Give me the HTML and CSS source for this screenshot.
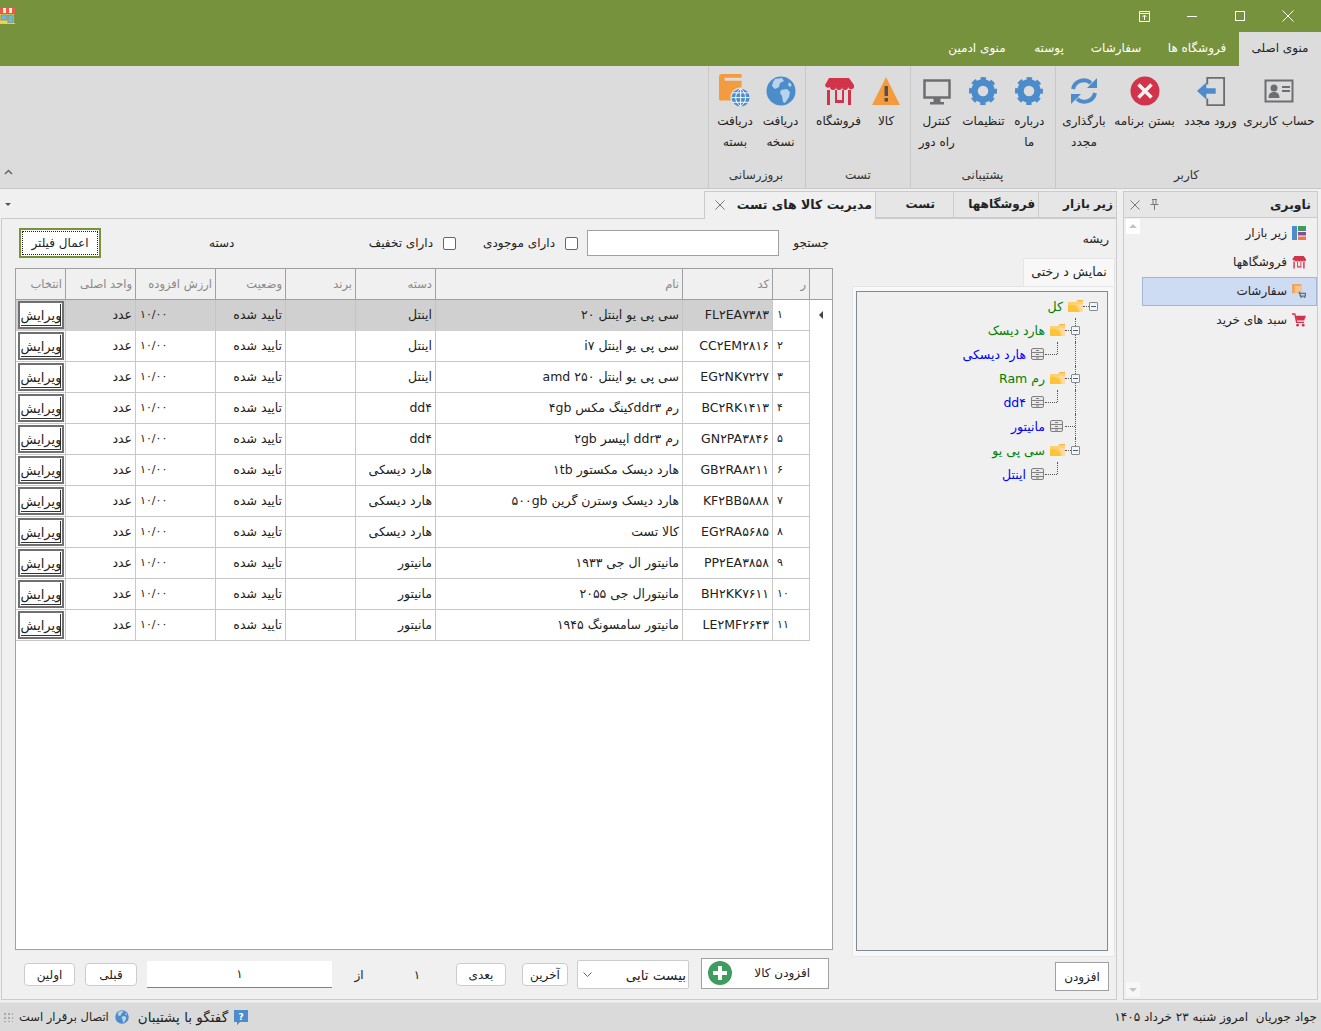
FILE: index.html
```html
<!DOCTYPE html>
<html lang="fa" dir="rtl">
<head>
    <meta charset="UTF-8">
    <title>مدیریت کالا های تست</title>
    <link rel="stylesheet" href="styles.css">
</head>
<body>
    <!-- Shared icons -->
    <svg class="defs" width="0" height="0">
        <symbol id="gear" viewBox="0 0 30 30">
            <circle cx="15" cy="15" r="8.500" fill="none" stroke="#4d8ccb" stroke-width="6.500"/>
            <circle cx="15" cy="15" r="11.500" fill="none" stroke="#4d8ccb" stroke-width="5" stroke-dasharray="5 4.030" stroke-dashoffset="2.500"/>
        </symbol>
        <symbol id="globe" viewBox="0 0 30 30">
            <circle cx="15" cy="15" r="14.5" fill="#4d8ccb"/>
            <path d="M9 3l7-1 2 3-4 2-1 4-4 2-3-3 1-4zM15 14l6-1 3 3-1 5-4 6-2-1-1-6-2-3zM23 6l3 3-2 2-2-2z" fill="#b9d3ec"/>
        </symbol>
        <symbol id="store" viewBox="0 0 30 30">
            <path d="M5 2h20l5 7a3 3 0 0 1-6 2 3 3 0 0 1-6 0 3 3 0 0 1-6 0 3 3 0 0 1-6 0 3 3 0 0 1-5-2z" fill="#d2334a"/>
            <path d="M3 14h3v15H3zM24 14h3v15h-3zM11 14h2v10h5V14h2v13h-9z" fill="#d2334a"/>
        </symbol>
        <symbol id="folder" viewBox="0 0 15 12">
            <path d="M0 2h9l1-2h5v12H0z" fill="#fdd26e"/>
            <path d="M8 2l2-2h5v1h-5l-1 1z" fill="#f7b34a"/>
            <path d="M0 5c7-1 10 2 11 7H0z" fill="#fdc435"/>
            <path d="M8 4h7v8h-3c0-4-1-6-4-8z" fill="#fcd9a5"/>
        </symbol>
        <symbol id="leaf" viewBox="0 0 13 12">
            <rect x=".5" y=".5" width="12" height="11" rx="1.5" fill="#e8e8e8" stroke="#808080"/>
            <path d="M0 4.500h13M0 8.500h13M5 2.500h3M5 6.500h3M5 10h3" stroke="#808080" fill="none"/>
        </symbol>
        <symbol id="close" viewBox="0 0 10 10">
            <path d="M.5 .5l9 9M9.500 .5l-9 9" stroke="#777" fill="none"/>
        </symbol>
    </svg>

    <header class="titlebar">
        <div class="title-top">
            <div class="win-btn">
                <svg width="12" height="12" viewBox="0 0 12 12"><path d="M.5 .5l11 11M11.500 .5l-11 11" stroke="#fff" fill="none"/></svg>
            </div>
            <div class="win-btn">
                <svg width="10" height="10" viewBox="0 0 10 10"><rect x=".5" y=".5" width="9" height="9" stroke="#fff" fill="none"/></svg>
            </div>
            <div class="win-btn">
                <svg width="10" height="10" viewBox="0 0 10 10"><path d="M0 5.500h10" stroke="#fff"/></svg>
            </div>
            <div class="win-btn">
                <svg width="11" height="11" viewBox="0 0 11 11"><path d="M.5 .5h10v10H.5zM.5 2.500h10M5.500 9V4.500M3.500 6l2-2 2 2" stroke="#fff" fill="none"/></svg>
            </div>
            <svg class="app-icon" width="15" height="16" viewBox="0 0 15 16">
                <rect x="0" y="6" width="14" height="9" fill="#f5cf5a"/>
                <rect x="1" y="7" width="6" height="5" fill="#6cb6e8" stroke="#8a9a50"/>
                <rect x="8" y="7" width="5" height="8" fill="#6cb6e8" stroke="#8a9a50"/>
                <path d="M0 0h15v5H0z" fill="#ef5a46"/>
                <path d="M3 0h3v5H3zM9 0h3v5H9z" fill="#f7efe0"/>
                <rect x="0" y="15" width="15" height="1" fill="#c8c8c8"/>
            </svg>
        </div>
        <nav class="menu-tabs">
            <a class="menu-tab active">منوی اصلی</a>
            <a class="menu-tab">فروشگاه ها</a>
            <a class="menu-tab">سفارشات</a>
            <a class="menu-tab">پوسته</a>
            <a class="menu-tab">منوی ادمین</a>
        </nav>
    </header>

    <!-- Ribbon -->
    <section class="ribbon">
        <div class="ribbon-group group-user">
            <div class="ribbon-items">
                <div class="ribbon-item w-account">
                    <svg class="ribbon-icon" viewBox="0 0 30 30"><rect x="1.500" y="4.500" width="27" height="21" fill="none" stroke="#6d6e71" stroke-width="2"/><circle cx="10" cy="12" r="3.500" fill="#6d6e71"/><path d="M4.500 22c0-5 3-6 5.500-6s5.500 1 5.500 6z" fill="#6d6e71"/><path d="M18 11h8M18 15h8" stroke="#6d6e71" stroke-width="2"/></svg>
                    <span>حساب کاربری</span>
                </div>
                <div class="ribbon-item w-login">
                    <svg class="ribbon-icon" viewBox="0 0 32 32"><path d="M12 9V2h18v29H12v-7" fill="none" stroke="#6d6e71" stroke-width="2"/><path d="M1 16l10-9v6h10v6H11v6z" fill="#4d8ccb"/></svg>
                    <span>ورود مجدد</span>
                </div>
                <div class="ribbon-item w-exit">
                    <svg class="ribbon-icon" viewBox="0 0 30 30"><circle cx="15" cy="15" r="14.500" fill="#d2334a"/><path d="M8.500 8.500l13 13M21.500 8.500l-13 13" stroke="#f2f2f2" stroke-width="3.500"/></svg>
                    <span>بستن برنامه</span>
                </div>
                <div class="ribbon-item w-reload">
                    <svg class="ribbon-icon" viewBox="0 0 30 30"><path d="M4 13a11 11 0 0 1 18-6" fill="none" stroke="#4d8ccb" stroke-width="4"/><path d="M18 12h10V2z" fill="#4d8ccb"/><path d="M26 17a11 11 0 0 1-18 6" fill="none" stroke="#4d8ccb" stroke-width="4"/><path d="M12 18H2v10z" fill="#4d8ccb"/></svg>
                    <span>بارگذاری مجدد</span>
                </div>
            </div>
            <div class="group-title">کاربر</div>
        </div>
        <div class="ribbon-group group-support">
            <div class="ribbon-items">
                <div class="ribbon-item w-about">
                    <svg class="ribbon-icon"><use href="#gear"/></svg>
                    <span>درباره ما</span>
                </div>
                <div class="ribbon-item w-settings">
                    <svg class="ribbon-icon"><use href="#gear"/></svg>
                    <span>تنظیمات</span>
                </div>
                <div class="ribbon-item w-remote">
                    <svg class="ribbon-icon" viewBox="0 0 30 30"><rect x="2.500" y="4.500" width="25" height="17" fill="none" stroke="#6d6e71" stroke-width="2.500"/><rect x="11.500" y="22" width="7" height="4" fill="#6d6e71"/><rect x="8" y="26" width="14" height="2.500" fill="#6d6e71"/></svg>
                    <span>کنترل راه دور</span>
                </div>
            </div>
            <div class="group-title">پشتیبانی</div>
        </div>
        <div class="ribbon-group group-test">
            <div class="ribbon-items">
                <div class="ribbon-item w-goods">
                    <svg class="ribbon-icon" viewBox="0 0 30 30"><path d="M15 1l14 28H1z" fill="#f49b3f"/><rect x="13.500" y="10" width="3.500" height="10" fill="#55504a"/><rect x="13.500" y="22" width="3.500" height="3.500" fill="#55504a"/></svg>
                    <span>کالا</span>
                </div>
                <div class="ribbon-item w-shop">
                    <svg class="ribbon-icon"><use href="#store"/></svg>
                    <span>فروشگاه</span>
                </div>
            </div>
            <div class="group-title">تست</div>
        </div>
        <div class="ribbon-group group-update">
            <div class="ribbon-items">
                <div class="ribbon-item w-version">
                    <svg class="ribbon-icon"><use href="#globe"/></svg>
                    <span>دریافت نسخه</span>
                </div>
                <div class="ribbon-item w-package">
                    <svg class="ribbon-icon icon-large" viewBox="0 0 34 36"><path d="M3 0h21v4H6v3h18v21H3a2 2 0 0 1-3-2V3a3 3 0 0 1 3-3z" fill="#f49b3f"/><circle cx="23" cy="25" r="11" fill="#dcdcdc"/><circle cx="23" cy="25" r="9.500" fill="#4d8ccb"/><path d="M13.500 25h19M14.500 20h17M14.500 30h17M23 15.500v19M23 15.500c-7 5-7 14 0 19M23 15.500c7 5 7 14 0 19" stroke="#fff" fill="none"/></svg>
                    <span>دریافت بسته</span>
                </div>
            </div>
            <div class="group-title">بروزرسانی</div>
        </div>
        <svg class="ribbon-collapse" width="9" height="6" viewBox="0 0 9 6"><path d="M1 5l3.500-3.500L8 5" fill="none" stroke="#666" stroke-width="1.500"/></svg>
    </section>

    <main class="workspace">
        <!-- Navigation panel -->
        <aside class="nav-panel">
            <div class="nav-header">
                <b>ناوبری</b>
                <svg class="pin" width="9" height="11" viewBox="0 0 9 11"><path d="M2 .5h5M3 .5v5M6 .5v5M.5 5.500h8M4.500 6v5" stroke="#777" fill="none"/></svg>
                <svg class="icon-x" width="10" height="10"><use href="#close"/></svg>
            </div>
            <div class="nav-body">
                <a class="nav-item">
                    <svg class="nav-icon" viewBox="0 0 14 14"><rect width="5" height="14" fill="#4d8ccb"/><rect x="6" width="8" height="5" fill="#3f9c5f"/><rect x="6" y="6" width="8" height="3.500" fill="#8e4a9b"/><rect x="6" y="10.500" width="8" height="3.500" fill="#ea7a46"/></svg>
                    <span>زیر بازار</span>
                </a>
                <a class="nav-item">
                    <svg class="nav-icon"><use href="#store"/></svg>
                    <span>فروشگاهها</span>
                </a>
                <a class="nav-item selected">
                    <svg class="nav-icon" viewBox="0 0 15 15"><rect y="0" width="10" height="10" rx="1" fill="#f0a35c"/><rect x="3" y="2" width="7" height="8" fill="#f7c48c"/><path d="M7 9h1l1 4h5l1-3H9" fill="none" stroke="#5f6f73" stroke-width="1.500"/><circle cx="10" cy="14" r="1" fill="#5f6f73"/><circle cx="13.500" cy="14" r="1" fill="#5f6f73"/></svg>
                    <span>سفارشات</span>
                </a>
                <a class="nav-item">
                    <svg class="nav-icon" viewBox="0 0 15 15"><path d="M0 1h3l2 9h8" fill="none" stroke="#d2334a" stroke-width="1.500"/><path d="M4 3h11l-2 5H5z" fill="#d2334a"/><circle cx="6" cy="13" r="1.500" fill="#d2334a"/><circle cx="12" cy="13" r="1.500" fill="#d2334a"/></svg>
                    <span>سبد های خرید</span>
                </a>
                <div class="scroll-btn scroll-up"></div>
                <div class="scroll-btn scroll-down"></div>
            </div>
        </aside>

        <!-- Document area -->
        <section class="doc-panel">
            <div class="doc-tabs">
                <a class="doc-tab t-sub">زیر بازار</a>
                <a class="doc-tab t-shops">فروشگاهها</a>
                <a class="doc-tab t-test">تست</a>
                <a class="doc-tab t-goods active">مدیریت کالا های تست <svg class="icon-x" width="10" height="10"><use href="#close"/></svg></a>
                <span class="doc-tabs-arrow"></span>
            </div>
            <div class="doc-body">
                <div class="tree-col">
                    <div class="root-label">ریشه</div>
                    <div class="tree-tabs"><a class="tree-tab">نمایش د رختی</a></div>
                    <div class="tree-frame">
                        <div class="tree">
                            <div class="tree-row lvl-0 branch"><i class="expander"></i><i class="stub"></i><svg class="t-icon"><use href="#folder"/></svg><span>کل</span></div>
                            <div class="tree-row lvl-1 branch trunk"><i class="expander"></i><i class="stub"></i><svg class="t-icon"><use href="#folder"/></svg><span>هارد دیسک</span></div>
                            <div class="tree-row lvl-2 leaf trunk"><i class="stub"></i><svg class="t-icon"><use href="#leaf"/></svg><span>هارد دیسکی</span></div>
                            <div class="tree-row lvl-1 branch trunk"><i class="expander"></i><i class="stub"></i><svg class="t-icon"><use href="#folder"/></svg><span>رم Ram</span></div>
                            <div class="tree-row lvl-2 leaf trunk"><i class="stub"></i><svg class="t-icon"><use href="#leaf"/></svg><span>dd۴</span></div>
                            <div class="tree-row lvl-1b leaf trunk"><i class="stub"></i><svg class="t-icon"><use href="#leaf"/></svg><span>مانیتور</span></div>
                            <div class="tree-row lvl-1 branch trunk-end"><i class="expander"></i><i class="stub"></i><svg class="t-icon"><use href="#folder"/></svg><span>سی پی یو</span></div>
                            <div class="tree-row lvl-2 leaf"><i class="stub"></i><svg class="t-icon"><use href="#leaf"/></svg><span>اینتل</span></div>
                        </div>
                    </div>
                    <div class="tree-footer"><button class="btn-flat">افزودن</button></div>
                </div>

                <div class="grid-col">
                    <div class="filter-row">
                        <label class="f-search">جستجو</label>
                        <input class="search-input" type="text">
                        <input class="check c-stock" type="checkbox">
                        <label class="f-stock">دارای موجودی</label>
                        <input class="check c-off" type="checkbox">
                        <label class="f-off">دارای تخفیف</label>
                        <label class="f-cat">دسته</label>
                        <button class="btn-apply"><span>اعمال فیلتر</span></button>
                    </div>

                    <div class="grid">
                        <table>
                            <colgroup>
                                <col class="c1"><col class="c2"><col class="c3"><col class="c4"><col class="c5">
                                <col class="c6"><col class="c7"><col class="c8"><col class="c9"><col class="c10">
                            </colgroup>
                            <thead>
                                <tr><th></th><th>ر</th><th>کد</th><th>نام</th><th>دسته</th><th>برند</th><th>وضعیت</th><th>ارزش افزوده</th><th>واحد اصلی</th><th>انتخاب</th></tr>
                            </thead>
                            <tbody>
                                <tr class="current"><td class="sel"><i class="caret"></i></td><td class="num">۱</td><td>FL۲EA۷۳۸۳</td><td>سی پی یو اینتل ۲۰</td><td>اینتل</td><td></td><td>تایید شده</td><td class="num">۱۰/۰۰</td><td>عدد</td><td class="act"><button>ویرایش</button></td></tr>
                                <tr><td class="sel"></td><td class="num">۲</td><td>CC۲EM۲۸۱۶</td><td>سی پی یو اینتل i۷</td><td>اینتل</td><td></td><td>تایید شده</td><td class="num">۱۰/۰۰</td><td>عدد</td><td class="act"><button>ویرایش</button></td></tr>
                                <tr><td class="sel"></td><td class="num">۳</td><td>EG۲NK۷۲۲۷</td><td>سی پی یو اینتل amd ۲۵۰</td><td>اینتل</td><td></td><td>تایید شده</td><td class="num">۱۰/۰۰</td><td>عدد</td><td class="act"><button>ویرایش</button></td></tr>
                                <tr><td class="sel"></td><td class="num">۴</td><td>BC۲RK۱۴۱۳</td><td>رم ddr۳کینگ مکس ۴gb</td><td>dd۴</td><td></td><td>تایید شده</td><td class="num">۱۰/۰۰</td><td>عدد</td><td class="act"><button>ویرایش</button></td></tr>
                                <tr><td class="sel"></td><td class="num">۵</td><td>GN۲PA۳۸۴۶</td><td>رم ddr۳ اپیسر ۲gb</td><td>dd۴</td><td></td><td>تایید شده</td><td class="num">۱۰/۰۰</td><td>عدد</td><td class="act"><button>ویرایش</button></td></tr>
                                <tr><td class="sel"></td><td class="num">۶</td><td>GB۲RA۸۲۱۱</td><td>هارد دیسک مکستور ۱tb</td><td>هارد دیسکی</td><td></td><td>تایید شده</td><td class="num">۱۰/۰۰</td><td>عدد</td><td class="act"><button>ویرایش</button></td></tr>
                                <tr><td class="sel"></td><td class="num">۷</td><td>KF۲BB۵۸۸۸</td><td>هارد دیسک وسترن گرین ۵۰۰gb</td><td>هارد دیسکی</td><td></td><td>تایید شده</td><td class="num">۱۰/۰۰</td><td>عدد</td><td class="act"><button>ویرایش</button></td></tr>
                                <tr><td class="sel"></td><td class="num">۸</td><td>EG۲RA۵۶۸۵</td><td>کالا تست</td><td>هارد دیسکی</td><td></td><td>تایید شده</td><td class="num">۱۰/۰۰</td><td>عدد</td><td class="act"><button>ویرایش</button></td></tr>
                                <tr><td class="sel"></td><td class="num">۹</td><td>PP۲EA۳۸۵۸</td><td>مانیتور ال جی ۱۹۳۳</td><td>مانیتور</td><td></td><td>تایید شده</td><td class="num">۱۰/۰۰</td><td>عدد</td><td class="act"><button>ویرایش</button></td></tr>
                                <tr><td class="sel"></td><td class="num">۱۰</td><td>BH۲KK۷۶۱۱</td><td>مانیتورال جی ۲۰۵۵</td><td>مانیتور</td><td></td><td>تایید شده</td><td class="num">۱۰/۰۰</td><td>عدد</td><td class="act"><button>ویرایش</button></td></tr>
                                <tr><td class="sel"></td><td class="num">۱۱</td><td>LE۲MF۲۶۴۳</td><td>مانیتور سامسونگ ۱۹۴۵</td><td>مانیتور</td><td></td><td>تایید شده</td><td class="num">۱۰/۰۰</td><td>عدد</td><td class="act"><button>ویرایش</button></td></tr>
                            </tbody>
                        </table>
                    </div>

                    <div class="pager">
                        <button class="btn-add">
                            <span>افزودن کالا</span>
                            <svg width="24" height="24" viewBox="0 0 24 24"><circle cx="12" cy="12" r="12" fill="#3f9c5f"/><path d="M12 5v14M5 12h14" stroke="#fff" stroke-width="4"/></svg>
                        </button>
                        <div class="page-size">
                            <span>بیست تایی</span>
                            <svg width="9" height="5" viewBox="0 0 9 5"><path d="M.5 .5l4 4 4-4" fill="none" stroke="#666"/></svg>
                        </div>
                        <button class="btn-page p-last">آخرین</button>
                        <button class="btn-page p-next">بعدی</button>
                        <span class="page-text p-count">۱</span>
                        <span class="page-text p-of">از</span>
                        <div class="page-input">۱</div>
                        <button class="btn-page p-prev">قبلی</button>
                        <button class="btn-page p-first">اولین</button>
                    </div>
                </div>
            </div>
        </section>
    </main>

    <footer class="statusbar">
        <span>جواد جوریان &nbsp;امروز شنبه ۲۳ خرداد ۱۴۰۵</span>
        <div class="status-left">
            <svg width="14" height="15" viewBox="0 0 14 15"><path d="M0 0h14v12H6l-3 3v-3H0z" fill="#4d8ccb"/><text x="7" y="10" font-size="9" font-weight="bold" fill="#fff" text-anchor="middle" font-family="DejaVu Sans">?</text></svg>
            <span class="chat">گفتگو با پشتیبان</span>
            <svg width="14" height="14"><use href="#globe"/></svg>
            <span class="conn">اتصال برقرار است</span>
            <i class="grip"></i>
        </div>
    </footer>
</body>
</html>
```
FILE: styles.css
```css
* {
    box-sizing: border-box;
}
html, body {
    margin: 0;
    padding: 0;
}
body {
    font-family: "DejaVu Sans", sans-serif;
    font-size: 12px;
    color: #222;
    background-color: #f0f0f0;
    width: 1321px;
    height: 1031px;
    overflow: hidden;
    display: flex;
    flex-direction: column;
}
.defs {
    position: absolute;
}
button {
    font-family: inherit;
    font-size: inherit;
    color: inherit;
    padding: 0;
}

/* Title bar */
.titlebar {
    height: 66px;
    background-color: #76923c;
    flex: none;
}
.title-top {
    height: 32px;
    display: flex;
    padding-right: 9px;
}
.win-btn {
    width: 48px;
    height: 32px;
    display: flex;
    align-items: center;
    justify-content: center;
}
.app-icon {
    margin-right: auto;
    margin-top: 8px;
}
.menu-tabs {
    height: 34px;
    display: flex;
}
.menu-tab {
    display: flex;
    align-items: center;
    justify-content: center;
    color: #fff;
    width: 82px;
    padding-bottom: 2px;
}
.menu-tab:nth-child(2) { width: 84px; }
.menu-tab:nth-child(3) { width: 78px; }
.menu-tab:nth-child(4) { width: 56px; }
.menu-tab:nth-child(5) { width: 88px; }
.menu-tab.active {
    background-color: #dcdcdc;
    color: #222;
}

/* Ribbon */
.ribbon {
    height: 123px;
    flex: none;
    display: flex;
    position: relative;
    background-color: #dcdcdc;
    border-bottom: 1px solid #c8c8c8;
}
.ribbon-group {
    display: flex;
    flex-direction: column;
    border-left: 1px solid #c8c8c8;
}
.group-user { width: 266px; padding-right: 4px; }
.group-support { width: 145px; padding-right: 1px; }
.group-test { width: 105px; }
.group-update { width: 97px; padding-right: 2px; }
.ribbon-items {
    flex: 1;
    display: flex;
    padding-top: 10px;
    min-height: 0;
}
.ribbon-item {
    display: flex;
    flex-direction: column;
    align-items: center;
    text-align: center;
    line-height: 21px;
}
.ribbon-item span {
    margin-top: 5px;
}
.ribbon-icon {
    width: 30px;
    height: 30px;
    flex: none;
}
.icon-large {
    width: 32px;
    height: 34px;
    margin: -2px 0 -2px;
}
.w-account { width: 76px; }
.w-login { width: 61px; }
.w-exit { width: 71px; }
.w-reload { width: 50px; }
.w-about { width: 50px; padding: 0 6px; }
.w-settings { width: 42px; }
.w-remote { width: 52px; padding: 0 4px; }
.w-goods { width: 48px; }
.w-shop { width: 47px; }
.w-version { width: 45px; }
.w-package { width: 46px; }
.w-settings span {
    white-space: nowrap;
}
.group-title {
    height: 26px;
    line-height: 26px;
    text-align: center;
    color: #333;
    flex: none;
}
.ribbon-collapse {
    position: absolute;
    left: 4px;
    top: 103px;
}

/* Workspace */
.workspace {
    flex: 1;
    display: flex;
    padding: 2px 3px 2px 0;
    gap: 6px;
    min-height: 0;
}
.nav-panel {
    width: 195px;
    flex: none;
    display: flex;
    flex-direction: column;
    border: 1px solid #cbcbcb;
}
.nav-header {
    height: 26px;
    flex: none;
    display: flex;
    align-items: center;
    background-color: #e6e6e6;
    border-bottom: 1px solid #cbcbcb;
    padding-right: 6px;
}
.nav-header b {
    font-size: 12.5px;
}
.pin {
    margin-right: auto;
}
.nav-header .icon-x {
    margin: 0 10px 0 6px;
}
.nav-body {
    flex: 1;
    position: relative;
    padding: 1px 0 0 18px;
}
.nav-item {
    height: 29px;
    display: flex;
    align-items: center;
    gap: 5px;
    padding: 0 10px 2px 0;
    border: 1px solid transparent;
}
.nav-item.selected {
    background-color: #cddbf3;
    border-color: #a6b6d2;
}
.nav-icon {
    width: 14px;
    height: 14px;
    flex: none;
}
.scroll-btn {
    position: absolute;
    left: 2px;
    width: 14px;
    height: 15px;
    background-color: #fff;
}
.scroll-btn::after {
    content: "";
    position: absolute;
    left: 3px;
    border-left: 4px solid transparent;
    border-right: 4px solid transparent;
}
.scroll-up { top: 1px; }
.scroll-down { bottom: 2px; background-color: #f7f7f7; }
.scroll-up::after { top: 5px; border-bottom: 4px solid #c4c4c4; }
.scroll-down::after { top: 6px; border-top: 4px solid #c4c4c4; }

/* Document tabs */
.doc-panel {
    flex: 1;
    display: flex;
    flex-direction: column;
    min-width: 0;
}
.doc-tabs {
    height: 28px;
    flex: none;
    display: flex;
    position: relative;
    z-index: 1;
}
.doc-tab {
    display: flex;
    align-items: center;
    padding: 0 3px 2px 0;
    height: 27px;
    font-weight: bold;
    white-space: nowrap;
    background-color: #e6e6e6;
    border: 1px solid #cbcbcb;
    border-right: 0;
}
.t-sub { width: 79px; border-right: 1px solid #cbcbcb; }
.t-shops { width: 85px; }
.t-test { width: 78px; padding-right: 18px; }
.t-goods { width: 171px; }
.doc-tab.active {
    height: 28px;
    font-size: 12.5px;
    background-color: #f0f0f0;
    border-bottom: 0;
    gap: 8px;
}
.doc-tab .icon-x {
    margin-right: auto;
    margin-left: 10px;
}
.doc-tabs-arrow {
    margin-right: auto;
    margin-left: 5px;
    margin-top: 12px;
    width: 0;
    height: 0;
    border-left: 3px solid transparent;
    border-right: 3px solid transparent;
    border-top: 3px solid #555;
}
.doc-body {
    flex: 1;
    display: flex;
    min-height: 0;
    border: 1px solid #cbcbcb;
    margin-top: -1px;
    margin-left: 1px;
    padding: 0 1px 0 13px;
    gap: 19px;
}

/* Tree column */
.tree-col {
    width: 263px;
    flex: none;
    display: flex;
    flex-direction: column;
}
.root-label {
    height: 39px;
    padding: 13px 6px 0 0;
    flex: none;
}
.tree-tabs {
    height: 28px;
    flex: none;
    display: flex;
}
.tree-tab {
    width: 92px;
    display: flex;
    align-items: center;
    justify-content: center;
    padding-bottom: 3px;
    font-size: 12.5px;
    background-color: #f8f8f8;
    border: 1px solid #e6e6e6;
    border-bottom: 0;
}
.tree-frame {
    flex: 1;
    background-color: #f8f8f8;
    border: 1px solid #e6e6e6;
    padding: 4px 6px 5px 3px;
    min-height: 0;
}
.tree {
    height: 100%;
    font-size: 12.5px;
    background-color: #f0f0f0;
    border: 1px solid #808a90;
    padding-top: 2px;
}
.tree-row {
    height: 24px;
    display: flex;
    align-items: center;
    gap: 5px;
    position: relative;
}
.tree-row.branch { color: #008000; }
.tree-row.leaf { color: #0000ff; }
.lvl-0 { padding-right: 9px; }
.lvl-1 { padding-right: 27px; }
.lvl-1b { padding-right: 32px; }
.lvl-2 { padding-right: 50px; }
.expander {
    width: 9px;
    height: 9px;
    flex: none;
    margin-left: -5px;
    border: 1px solid #8a8a8a;
    border-radius: 1px;
    background: linear-gradient(#36649c, #36649c) center / 5px 1px no-repeat #f5f5f5;
    position: relative;
    z-index: 1;
}
.stub {
    width: 6px;
    flex: none;
    border-top: 1px dotted #555;
    margin-left: -5px;
}
.leaf .stub {
    width: 12px;
    margin-left: -4px;
}
.lvl-1b .stub {
    width: 10px;
    margin-left: -3px;
}
.t-icon {
    width: 15px;
    height: 12px;
    flex: none;
}
.leaf .t-icon {
    width: 13px;
}
.tree-row.trunk::before,
.tree-row.trunk-end::before,
.tree-row.lvl-2::after {
    content: "";
    position: absolute;
    border-right: 1px dotted #555;
}
.tree-row.trunk::before {
    right: 31px;
    top: 0;
    height: 24px;
}
.tree-row.trunk-end::before {
    right: 31px;
    top: 0;
    height: 8px;
}
.tree-row.lvl-2::after {
    right: 49px;
    top: 0;
    height: 12px;
}
.tree-footer {
    height: 42px;
    flex: none;
    display: flex;
    padding: 5px 6px 0 0;
}
.btn-flat {
    width: 54px;
    height: 29px;
    background-color: #fff;
    border: 1px solid #a0a0a0;
}

/* Filter row */
.grid-col {
    flex: 1;
    display: flex;
    flex-direction: column;
    min-width: 0;
}
.filter-row {
    height: 49px;
    flex: none;
    display: flex;
    align-items: center;
    padding: 0 4px 1px;
}
.f-search {
    width: 38px;
    white-space: nowrap;
}
.search-input {
    width: 192px;
    height: 26px;
    margin-right: 12px;
    background-color: #fff;
    border: 1px solid #a0a0a0;
}
.check {
    appearance: none;
    width: 13px;
    height: 13px;
    margin: 0;
    flex: none;
    background-color: #fff;
    border: 1px solid #666;
    border-radius: 2px;
}
.c-stock { margin-right: 9px; }
.c-off { margin-right: 27px; }
.f-stock, .f-off {
    margin-right: 10px;
    white-space: nowrap;
}
.f-cat {
    margin-right: auto;
    margin-left: 108px;
}
.btn-apply {
    width: 82px;
    height: 30px;
    background-color: #fff;
    border: 2px solid #76923c;
    display: flex;
    padding: 1px;
}
.btn-apply span {
    flex: 1;
    display: flex;
    align-items: center;
    justify-content: center;
    border: 1px dotted #222;
}

/* Data grid */
.grid {
    flex: 1;
    background-color: #fff;
    border: 1px solid #a0a0a0;
    min-height: 0;
}
table {
    width: 816px;
    table-layout: fixed;
    border-collapse: separate;
    border-spacing: 0;
}
.c1 { width: 23px; }
.c2 { width: 37px; }
.c3 { width: 90px; }
.c4 { width: 247px; }
.c5 { width: 80px; }
.c6 { width: 70px; }
.c7 { width: 70px; }
.c8 { width: 80px; }
.c9 { width: 70px; }
.c10 { width: 49px; }
th, td {
    height: 31px;
    padding: 0 3px;
    text-align: right;
    white-space: nowrap;
    overflow: hidden;
}
th {
    font-weight: normal;
    font-size: 11.5px;
    color: #888;
    background-color: #f0f0f0;
    border-left: 1px solid #a0a0a0;
    border-bottom: 1px solid #a0a0a0;
}
th:last-child, td:last-child {
    border-left: 0;
}
td {
    font-size: 12.5px;
    padding-bottom: 2px;
    border-left: 1px solid #c8c8c8;
    border-bottom: 1px solid #c8c8c8;
}
td.sel {
    background-color: #fff;
    border-bottom: 0;
}
td.num {
    font-size: 11px;
    text-align: left;
    padding-left: 4px;
}
.current td {
    background-color: #d0d0d0;
    border-color: #d0d0d0;
    border-left-color: #c4c4c4;
}
.current td.num:nth-child(2) {
    background-color: #fff;
    border-color: #c8c8c8;
}
.current td.sel {
    background-color: #fff;
    border-left-color: #c8c8c8;
}
.caret {
    display: block;
    width: 0;
    height: 0;
    margin: 0 auto;
    border-top: 4px solid transparent;
    border-bottom: 4px solid transparent;
    border-right: 4px solid #444;
}
td.act {
    padding: 0 1px;
}
td.act button {
    display: block;
    width: 46px;
    height: 28px;
    font-size: 13px;
    background-color: #fff;
    border: 2px solid #707070;
    box-shadow: inset 0 0 0 1px #fff, inset -1px -1px 0 1px #333;
}

/* Pager */
.pager {
    height: 49px;
    flex: none;
    display: flex;
    align-items: center;
    padding: 0 4px 0 9px;
}
.btn-add {
    width: 128px;
    height: 31px;
    margin-top: -3px;
    display: flex;
    align-items: center;
    justify-content: space-between;
    padding: 0 18px 0 6px;
    background-color: #fff;
    border: 1px solid #a0a0a0;
}
.page-size {
    width: 112px;
    height: 29px;
    margin-right: 12px;
    display: flex;
    align-items: center;
    justify-content: space-between;
    padding: 0 2px 0 5px;
    background-color: #fff;
    border: 1px solid #ccc;
    border-radius: 2px;
    font-size: 13.5px;
}
.btn-page {
    height: 23px;
    background-color: #fff;
    border: 1px solid #ccc;
    border-radius: 4px;
}
.p-last { width: 46px; margin-right: 9px; }
.p-next { width: 50px; margin-right: 16px; }
.p-prev { width: 52px; margin-right: 10px; }
.p-first { width: 51px; margin-right: 10px; }
.page-text {
    width: 20px;
    text-align: center;
}
.p-count { margin-right: 29px; }
.p-of { margin-right: 38px; }
.page-input {
    width: 185px;
    height: 27px;
    margin-right: 17px;
    display: flex;
    align-items: center;
    justify-content: center;
    background-color: #fff;
    border-bottom: 1px solid #808080;
}

/* Status bar */
.statusbar {
    height: 29px;
    flex: none;
    display: flex;
    align-items: center;
    justify-content: space-between;
    padding: 0 4px 0 3px;
    background-color: #dadada;
    border-top: 1px solid #e6e6e6;
}
.status-left {
    display: flex;
    align-items: center;
    gap: 6px;
}
.chat {
    font-size: 13.5px;
    margin-left: 3px;
}
.conn {
    font-size: 11.5px;
}
.grip {
    width: 10px;
    height: 10px;
    background: radial-gradient(circle, #a8a8a8 1px, transparent 1px) 0 0 / 4px 4px;
}
```
